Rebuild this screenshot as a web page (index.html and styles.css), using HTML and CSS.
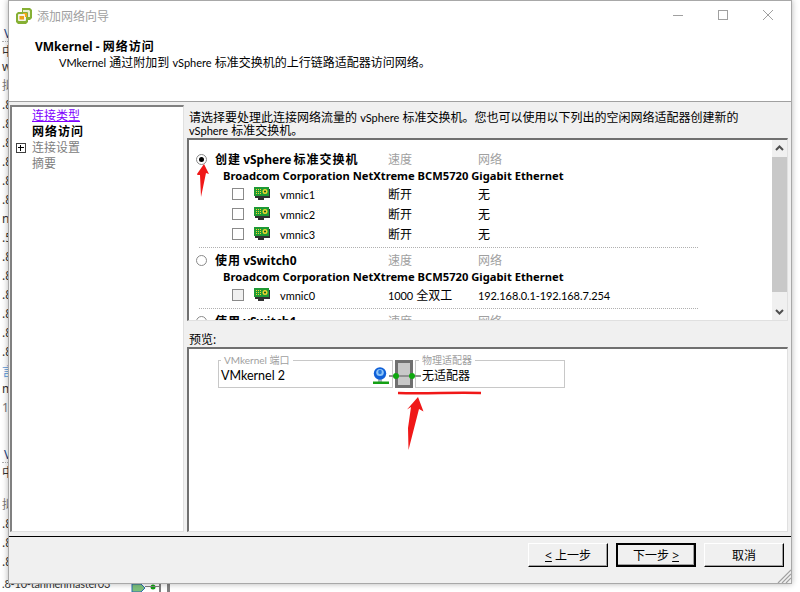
FILE: index.html
```html
<!DOCTYPE html>
<html lang="zh-CN">
  <head>
    <meta charset="UTF-8" />
    <title>添加网络向导</title>
    <link rel="stylesheet" href="styles.css">
  </head>
  <body>
    <!-- 后面窗口露出的部分 -->
    <div class="behind">
      <div class="behind-left">
        <div class="far dotted">V</div>
        <div>中</div>
        <div class="tight">wo</div>
        <div class="gray-row">拟</div>
        <div>.8</div><div>.8</div><div>.8</div><div>.8</div><div>.8</div><div>.8</div>
        <div>n</div><div>.5</div>
        <div>.8</div><div>.8</div><div>.8</div><div>.8</div><div>.8</div><div>.8</div>
        <div class="blue">言</div>
        <div class="tight-m">m</div>
        <div class="gray-row">19</div>
        <div class="far dotted gap-top">V</div>
        <div>中</div>
        <div class="gray-row gap-small">拟</div>
        <div>.8</div><div>.8</div><div>.8</div>
      </div>
      <div class="behind-bottom">.8-10-tanmenmaster03</div>
      <svg class="behind-icon" width="40" height="8" viewBox="0 0 40 8">
        <path d="M1 0h9l4 4-4 4H1z" fill="#7cc07c" stroke="#2a6ab0" />
        <circle cx="22" cy="3" r="2.500" fill="#10a010" />
        <path d="M14 2h16v1H14z" fill="#808080" />
        <path d="M28 0h2v8h-2zM36 0h3v8h-3z" fill="#808080" />
      </svg>
    </div>

    <div class="window">
      <div class="titlebar">
        <svg class="logo" width="16" height="16" viewBox="0 0 16 16">
          <path d="M6 0h8l2 2v8l-2 2h-2v2l-2 2H2l-2-2V6l2-2h4z" fill="#86b034" />
          <path d="M7 2h6l1 1v6h-2V5q0-1-1-1H7z" fill="#e8f0d0" />
          <path d="M3 6h6q1 0 1 1v5q0 1-1 1H3q-1 0-1-1V7q0-1 1-1z" fill="#f4f4e8" />
          <path d="M7 5h3q1 0 1 1v3H9V7q0-1-1-1H7z" fill="#f0a818" />
          <path d="M3.500 8H8v3.500H3.500z" fill="#eca018" />
        </svg>
        <span class="title-text">添加网络向导</span>
        <div class="controls">
          <svg width="12" height="12" viewBox="0 0 12 12"><path d="M1 6.500h10" stroke="#a0a0a0" /></svg>
          <svg width="12" height="12" viewBox="0 0 12 12"><rect x="1.500" y="1.500" width="9" height="9" fill="none" stroke="#a0a0a0" /></svg>
          <svg width="12" height="12" viewBox="0 0 12 12"><path d="M1 1l10 10M11 1L1 11" stroke="#a0a0a0" /></svg>
        </div>
      </div>

      <div class="header">
        <div class="header-title">VMkernel - <span class="spaced">网络访问</span></div>
        <div class="header-sub"><span class="en">VMkernel</span> 通过附加到 <span class="en">vSphere</span> 标准交换机的上行链路适配器访问网络。</div>
      </div>

      <div class="main">
        <div class="steps">
          <div class="step link">连接类型</div>
          <div class="step current">网络访问</div>
          <div class="step off"><span class="plus"></span>连接设置</div>
          <div class="step off">摘要</div>
        </div>

        <div class="content">
          <p class="intro">请选择要处理此连接网络流量的 <span class="en">vSphere</span> 标准交换机。您也可以使用以下列出的空闲网络适配器创建新的<br><span class="en">vSphere</span> 标准交换机。</p>

          <div class="list">
            <div class="list-inner">
              <div class="row head">
                <div class="head-name"><span class="radio checked"></span><b><span class="spaced">创建</span> vSphere <span class="spaced">标准交换机</span></b></div>
                <div class="gray">速度</div>
                <div class="gray">网络</div>
              </div>
              <div class="adapter">Broadcom Corporation NetXtreme BCM5720 Gigabit Ethernet</div>
              <div class="row nic">
                <div class="nic-name"><span class="check"></span><svg class="card" width="16" height="13" viewBox="0 0 16 13"><use href="#nic" /></svg><span class="en">vmnic1</span></div>
                <div>断开</div>
                <div>无</div>
              </div>
              <div class="row nic">
                <div class="nic-name"><span class="check"></span><svg class="card" width="16" height="13" viewBox="0 0 16 13"><use href="#nic" /></svg><span class="en">vmnic2</span></div>
                <div>断开</div>
                <div>无</div>
              </div>
              <div class="row nic">
                <div class="nic-name"><span class="check"></span><svg class="card" width="16" height="13" viewBox="0 0 16 13"><use href="#nic" /></svg><span class="en">vmnic3</span></div>
                <div>断开</div>
                <div>无</div>
              </div>
              <div class="sep"></div>

              <div class="row head">
                <div class="head-name"><span class="radio"></span><b><span class="spaced">使用</span> vSwitch0</b></div>
                <div class="gray">速度</div>
                <div class="gray">网络</div>
              </div>
              <div class="adapter">Broadcom Corporation NetXtreme BCM5720 Gigabit Ethernet</div>
              <div class="row nic">
                <div class="nic-name"><span class="check disabled"></span><svg class="card" width="16" height="13" viewBox="0 0 16 13"><use href="#nic" /></svg><span class="en">vmnic0</span></div>
                <div><span class="en num">1000</span> 全双工</div>
                <div class="en num">192.168.0.1-192.168.7.254</div>
              </div>
              <div class="sep"></div>

              <div class="row head">
                <div class="head-name"><span class="radio"></span><b><span class="spaced">使用</span> vSwitch1</b></div>
                <div class="gray">速度</div>
                <div class="gray">网络</div>
              </div>
            </div>
            <div class="scrollbar">
              <svg width="15" height="17" viewBox="0 0 15 17"><path d="M4 10l3.500-3.500L11 10" fill="none" stroke="#505050" stroke-width="2" /></svg>
              <div class="thumb"></div>
              <svg width="15" height="17" viewBox="0 0 15 17"><path d="M4 7l3.500 3.500L11 7" fill="none" stroke="#505050" stroke-width="2" /></svg>
            </div>
          </div>

          <div class="preview-label">预览:</div>

          <div class="preview">
            <div class="diagram">
              <div class="port">
                <span class="legend"><span class="en-small">VMkernel</span> 端口</span>
                <span class="en-big">VMkernel 2</span>
                <svg class="globe" width="16" height="17" viewBox="0 0 16 17">
                  <path d="M5 12h4v3H5z" fill="#a8b4bc" />
                  <circle cx="7" cy="6.500" r="6.200" fill="#1060d8" />
                  <ellipse cx="7" cy="5.500" rx="3.800" ry="3.500" fill="#8cc4f8" />
                  <ellipse cx="7" cy="5" rx="1.800" ry="2.200" fill="#2878e0" />
                  <path d="M0 14.500h16V17H0z" fill="#14a014" />
                </svg>
              </div>
              <div class="switch"></div>
              <div class="port uplink">
                <span class="legend">物理适配器</span>
                <span>无适配器</span>
              </div>
              <span class="wire"></span>
              <span class="dot dot-left"></span>
              <span class="dot dot-right"></span>
            </div>
          </div>
        </div>
      </div>

      <div class="footer">
        <button class="btn"><u>&lt;</u> 上一步</button>
        <button class="btn default">下一步 <u>&gt;</u></button>
        <button class="btn">取消</button>
        <svg class="grip" width="14" height="14" viewBox="0 0 14 14">
          <path d="M14 1L1 14M14 5L5 14M14 9L9 14" stroke="#a0a0a0" stroke-width="1.200" />
        </svg>
      </div>
    </div>

    <!-- 网卡图标 -->
    <svg width="0" height="0" class="defs">
      <symbol id="nic" viewBox="0 0 16 13">
        <path d="M1 2h15v9h-6v2H4v-2H1z" fill="#303030" />
        <path d="M0 0h15v9H0z" fill="#1f9a34" />
        <path d="M2 2h1v1H2zM4 2h1v1H4zM6 2h1v1H6zM2 4h1v1H2zM4 4h1v1H4zM6 4h1v1H6zM2 6h1v1H2zM4 6h1v1H4zM6 6h1v1H6z" fill="#f0d830" />
        <circle cx="11" cy="4.500" r="2.500" fill="#f0d830" />
        <circle cx="11" cy="4.500" r="1.100" fill="#146020" />
      </symbol>
    </svg>

    <!-- 红色标注 -->
    <svg class="marks" width="800" height="592" viewBox="0 0 800 592">
      <path d="M204 164l5 10-3-1-5 24-1-22-2.500 0-.5-1z" fill="#f01818" />
      <path d="M398 393c30 1 55-1 83 0" fill="none" stroke="#f01818" stroke-width="2.500" />
      <path d="M418 397l5.500 14.500-4.500-2.500-10.500 41-.5-22 3-21-4 2.500z" fill="#f01818" />
    </svg>
  </body>
</html>
```

FILE: styles.css
```css
* {
  box-sizing: border-box;
}

body {
  margin: 0;
  width: 800px;
  height: 592px;
  overflow: hidden;
  background: #fff;
  font-family: "Noto Sans", "Noto Sans CJK SC", sans-serif;
  font-size: 12px;
  color: #000;
  position: relative;
}

.defs {
  position: absolute;
}

.en {
  font-family: Lato, "Noto Sans", sans-serif;
  font-size: 11px;
}

.num {
  letter-spacing: -0.1px;
}

.en-big {
  font-family: Lato, "Noto Sans", sans-serif;
  font-size: 12.500px;
}

.en-small {
  font-family: Lato, "Noto Sans", sans-serif;
}

.spaced {
  letter-spacing: 1px;
}

/* 后面的窗口 */
.behind {
  position: absolute;
  top: 0;
  left: 0;
  width: 800px;
  height: 592px;
  color: #333;
}

.behind-left {
  position: absolute;
  top: 24px;
  left: 2px;
  width: 30px;
  line-height: 19px;
}

.behind-left .far {
  padding-left: 2px;
  color: #204080;
}

.dotted {
  border-bottom: 1px dotted #b0b0b0;
  height: 18px;
}

.tight {
  margin-top: -4px;
}

.tight-m {
  margin-top: -2px;
}

.gray-row {
  color: #777;
}

.blue {
  margin-top: 1px;
  color: #5a9ad8;
}

.gap-top {
  margin-top: 28px;
}

.gap-small {
  margin-top: 13px;
}

.behind-bottom {
  position: absolute;
  top: 576px;
  left: 2px;
  line-height: 16px;
  font-family: Lato, "Noto Sans", sans-serif;
  font-size: 11px;
  letter-spacing: -0.2px;
}

.behind-icon {
  position: absolute;
  top: 584px;
  left: 131px;
}

/* 向导窗口 */
.window {
  position: absolute;
  top: 0;
  left: 8px;
  width: 784px;
  height: 584px;
  background: #fff;
  border: 1px solid #a8a8a8;
  box-shadow: 0 0 6px rgba(0, 0, 0, 0.3);
  display: flex;
  flex-direction: column;
}

.titlebar {
  height: 29px;
  display: flex;
  align-items: center;
  padding-left: 7px;
  flex-shrink: 0;
}

.logo {
  margin-top: 1px;
}

.title-text {
  margin-left: 5px;
  color: #a0a0a0;
}

.controls {
  margin: -2px 17px 0 auto;
  display: flex;
  gap: 33px;
}

.header {
  height: 72px;
  padding: 8px 0 0 26px;
  border-bottom: 1px solid #a0a0a0;
  flex-shrink: 0;
}

.header-title {
  font-weight: bold;
  line-height: 17px;
}

.header-sub {
  padding-left: 24px;
  line-height: 16px;
}

.main {
  flex: 1;
  display: flex;
  background: #f0f0f0;
  padding: 3px 3px 4px 1px;
  border-bottom: 1px solid #000;
}

.steps {
  width: 174px;
  background: #fff;
  border: 1px solid #e0e0e0;
  border-top: 2px solid #808080;
  border-left: 2px solid #808080;
  padding: 1px 0 0 20px;
}

.step {
  line-height: 16px;
  position: relative;
}

.link {
  color: #8000ff;
  text-decoration: underline;
}

.current {
  font-weight: bold;
  letter-spacing: 1px;
}

.off {
  color: #808080;
}

.plus {
  position: absolute;
  left: -16px;
  top: 3px;
  width: 10px;
  height: 10px;
  border: 1px solid #404040;
  background:
    linear-gradient(#000, #000) 1px 3px / 6px 1px no-repeat,
    linear-gradient(#000, #000) 3px 1px / 1px 6px no-repeat;
}

.content {
  flex: 1;
  display: flex;
  flex-direction: column;
  padding-left: 3px;
  min-width: 0;
}

.intro {
  margin: 0 0 0 2px;
  padding-top: 6px;
  line-height: 13px;
  height: 33px;
  white-space: nowrap;
}

.list {
  height: 183px;
  flex-shrink: 0;
  display: flex;
  background: #fff;
  border: 1px solid #e0e0e0;
  border-top: 2px solid #707070;
  border-left: 2px solid #707070;
  overflow: hidden;
}

.list-inner {
  flex: 1;
  padding-top: 6px;
  overflow: hidden;
  min-width: 0;
}

.row {
  display: grid;
  grid-template-columns: 199px 90px 1fr;
  align-items: center;
  white-space: nowrap;
}

.head {
  height: 17px;
  margin-top: 4px;
}

.sep + .head {
  margin-top: 3px;
}

.head-name {
  display: flex;
  align-items: center;
  padding-left: 7px;
}

.head-name b {
  margin-left: 8px;
  word-spacing: -1px;
}

.radio {
  width: 11px;
  height: 11px;
  border: 1px solid #8a8a8a;
  border-radius: 50%;
  background: #fff;
  display: flex;
  align-items: center;
  justify-content: center;
}

.radio.checked::after {
  content: "";
  width: 5px;
  height: 5px;
  border-radius: 50%;
  background: #000;
}

.gray {
  color: #a0a0a0;
}

.adapter {
  height: 17px;
  line-height: 17px;
  padding-left: 34px;
  font-weight: bold;
  font-size: 11.200px;
  white-space: nowrap;
}

.nic {
  height: 20px;
}

.nic-name {
  display: flex;
  align-items: center;
  padding-left: 43px;
}

.check {
  width: 12px;
  height: 12px;
  border: 1px solid #8a8a8a;
  background: #fff;
}

.check.disabled {
  background: #f0f0f0;
}

.card {
  margin: 0 10px 2px 10px;
}

.sep {
  width: 499px;
  margin: 3px 0 0 10px;
  border-top: 1px dotted #b0b0b0;
}

.scrollbar {
  width: 15px;
  display: flex;
  flex-direction: column;
  background: #f0f0f0;
  flex-shrink: 0;
}

.scrollbar svg {
  flex-shrink: 0;
}

.thumb {
  height: 135px;
  background: #c8c8c8;
}

.scrollbar svg:last-child {
  margin-top: auto;
}

.preview-label {
  height: 26px;
  padding: 10px 0 0 2px;
  line-height: 17px;
  flex-shrink: 0;
}

.preview {
  flex: 1;
  background: #fff;
  border: 1px solid #e0e0e0;
  border-top: 2px solid #707070;
  border-left: 2px solid #707070;
  padding: 11px 0 0 29px;
}

.diagram {
  position: relative;
  display: flex;
  width: 347px;
  height: 28px;
}

.port {
  position: relative;
  width: 175px;
  height: 28px;
  border: 1px solid #c8c8c8;
  display: flex;
  align-items: center;
  justify-content: space-between;
  padding: 2px 3px 0 2px;
}

.uplink {
  width: 150px;
  padding-left: 6px;
}

.legend {
  position: absolute;
  top: -7px;
  left: 2px;
  padding: 0 3px;
  background: #fff;
  color: #a0a0a0;
  font-size: 10px;
  line-height: 12px;
}

.uplink .legend {
  left: 3px;
}

.switch {
  width: 18px;
  height: 28px;
  margin: 0 2px;
  background: #c8c8c8;
  border: 3px solid #707070;
}

.wire {
  position: absolute;
  top: 15px;
  left: 171px;
  height: 2px;
  width: 32px;
  background: #909090;
}

.dot {
  position: absolute;
  top: 13px;
  width: 6px;
  height: 6px;
  border-radius: 50%;
  background: #10a810;
}

.dot-left {
  left: 175px;
}

.dot-right {
  left: 191px;
}

.footer {
  height: 46px;
  background: #f0f0f0;
  display: flex;
  justify-content: flex-end;
  gap: 8px;
  padding: 6px 7px 0 0;
  position: relative;
  flex-shrink: 0;
}

.btn {
  width: 80px;
  height: 24px;
  padding: 0;
  background: #f0f0f0;
  border: 1px solid;
  border-color: #fff #000 #000 #fff;
  box-shadow: inset -1px -1px 0 #a0a0a0;
  font: inherit;
  color: #000;
}

.default {
  border: 2px solid #000;
}

.grip {
  position: absolute;
  right: 0;
  bottom: 0;
}

.marks {
  position: absolute;
  top: 0;
  left: 0;
  pointer-events: none;
}
```
